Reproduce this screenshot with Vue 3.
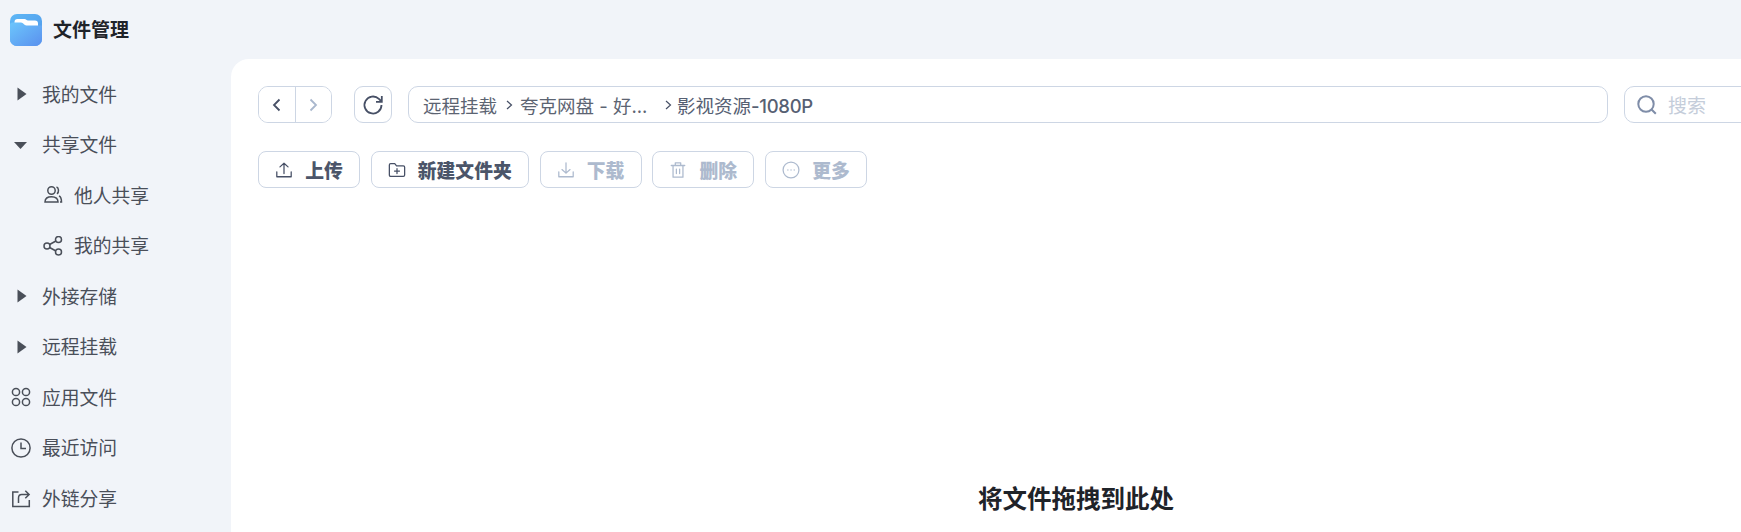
<template>
  <div class="page">
    <header class="top">
      <svg class="logo" viewBox="0 0 32 32">
        <defs>
          <linearGradient id="folderBack" x1="0" y1="0" x2="1" y2="1">
            <stop offset="0" stop-color="#5fb8f6" />
            <stop offset="1" stop-color="#4f97ea" />
          </linearGradient>
          <linearGradient id="folderFront" x1="0" y1="0" x2="1" y2="1">
            <stop offset="0" stop-color="#6cc6fc" />
            <stop offset="1" stop-color="#5a90ee" />
          </linearGradient>
        </defs>
        <rect width="32" height="32" rx="7" fill="url(#folderBack)" />
        <path d="M4.500 8c0-2 1-3 3-3h7c1.500 0 2 1.500 3.500 1.500h7c2 0 3 1 3 3V14H4.500z" fill="#fff" />
        <path d="M0 11c0-1.500 1-2.500 2.500-2.500H11c2.500 0 3 3 5.500 3H32V25a7 7 0 0 1-7 7H7a7 7 0 0 1-7-7z" fill="url(#folderFront)" />
      </svg>
      <span class="app-name">文件管理</span>
    </header>

    <div class="body">
      <aside class="side">
        <div v-for="item in navItems" :key="item.label" class="nav-row" :class="{ sub: item.sub }">
          <span class="nav-icon">
            <svg v-if="item.icon === 'right'" viewBox="0 0 20 20"><path d="M6.500 3.500 15.500 10l-9 6.500z" fill="#4a4f59" /></svg>
            <svg v-else-if="item.icon === 'down'" viewBox="0 0 20 20"><path d="M3 7h13l-6.500 7z" fill="#4a4f59" /></svg>
            <svg v-else-if="item.icon === 'users'" viewBox="0 0 20 20" class="line">
              <circle cx="8.500" cy="5.500" r="3.700" />
              <path d="M2 17c0-4 2.500-5.300 6.500-5.300s6.500 1.300 6.500 5.300zM13.500 2c2.300.7 2.800 5 .5 6.800M16 11c1.800.6 2.500 2.500 2.500 6h-1.500" />
            </svg>
            <svg v-else-if="item.icon === 'share'" viewBox="0 0 20 20" class="line">
              <circle cx="4" cy="10" r="3" /><circle cx="15.500" cy="3.500" r="3" /><circle cx="15.500" cy="16" r="3" />
              <path d="M6.600 8.500 12.900 5M6.600 11.500l6.300 3.500" />
            </svg>
            <svg v-else-if="item.icon === 'apps'" viewBox="0 0 20 20" class="line">
              <circle cx="5" cy="5" r="3.600" /><circle cx="15" cy="5" r="3.600" />
              <circle cx="5" cy="15" r="3.600" /><circle cx="15" cy="15" r="3.600" />
            </svg>
            <svg v-else-if="item.icon === 'clock'" viewBox="0 0 20 20" class="line">
              <circle cx="10" cy="10" r="9.100" /><path d="M10 4.500v6h5" />
            </svg>
            <svg v-else-if="item.icon === 'link'" viewBox="0 0 20 20" class="line">
              <path d="M7.500 4H1.800v14.500h16.500V12M7.500 15v-5c0-2.200 1-3.500 3.200-3.500h6.800M14.300 2.800l3.800 3.700-3.800 3.700" />
            </svg>
          </span>
          <span class="nav-text">{{ item.label }}</span>
        </div>
      </aside>

      <main class="main">
        <div class="path-row">
          <div class="nav-group">
            <button class="half">
              <svg viewBox="0 0 16 16" class="chev"><path d="M10.500 2.500 5 8l5.500 5.500" stroke="#475066" /></svg>
            </button>
            <button class="half">
              <svg viewBox="0 0 16 16" class="chev"><path d="M5.500 2.500 11 8l-5.500 5.500" stroke="#a9b7cd" /></svg>
            </button>
          </div>
          <button class="refresh">
            <svg viewBox="0 0 24 24" class="refresh-icon">
              <path d="M20.500 12a8.500 8.500 0 1 1-2.600-6.100L20.500 8.500M20.800 3v5.800H15" />
            </svg>
          </button>
          <div class="crumbs">
            <span>远程挂载</span>
            <svg viewBox="0 0 10 14" class="sep"><path d="M3 3 7.500 7 3 11" /></svg>
            <span class="crumb-long">夸克网盘 - 好...</span>
            <svg viewBox="0 0 10 14" class="sep"><path d="M3 3 7.500 7 3 11" /></svg>
            <span class="crumb-last">影视资源<span class="crumb-num">-1080P</span></span>
          </div>
          <div class="search">
            <svg viewBox="0 0 20 20" class="search-icon"><circle cx="9" cy="9" r="7.700" /><path d="m14.500 14.500 4.300 4.300" /></svg>
            <span>搜索</span>
          </div>
        </div>

        <div class="tools">
          <button v-for="tool in tools" :key="tool.label" class="tool" :class="{ off: tool.off }" :style="{ width: tool.width + 'px' }">
            <svg viewBox="0 0 20 20" class="tool-icon">
              <template v-if="tool.icon === 'upload'"><path d="M2 12v5.500h16V12M10 14V2.500M5.500 6.500l4.500-4 4.500 4" /></template>
              <template v-else-if="tool.icon === 'folder'"><path d="M1.500 4.500c0-1 .5-1.500 1.500-1.500h4.500l2 2.500H17c1 0 1.500.7 1.500 1.500v8.500c0 1-.5 1.500-1.500 1.500H3c-1 0-1.500-.5-1.500-1.500zM10 8.500v5.500M7.200 11.200h5.600" /></template>
              <template v-else-if="tool.icon === 'download'"><path d="M2 12v5.500h16V12M10 2V13.500M5.500 9.500l4.500 4 4.500-4" /></template>
              <template v-else-if="tool.icon === 'trash'"><path d="M2.500 5h15M7 5V2h6v3M4.500 5v13h11V5M8.200 9v5M11.800 9v5" /></template>
              <template v-else><circle cx="10" cy="10" r="8.800" /><path d="M6.500 10h.1M10 10h.1M13.500 10h.1" /></template>
            </svg>
            <span>{{ tool.label }}</span>
          </button>
        </div>

        <div class="drop">将文件拖拽到此处</div>
      </main>
    </div>
  </div>
</template>

<script setup>
const navItems = [
  { label: '我的文件', icon: 'right' },
  { label: '共享文件', icon: 'down' },
  { label: '他人共享', icon: 'users', sub: true },
  { label: '我的共享', icon: 'share', sub: true },
  { label: '外接存储', icon: 'right' },
  { label: '远程挂载', icon: 'right' },
  { label: '应用文件', icon: 'apps' },
  { label: '最近访问', icon: 'clock' },
  { label: '外链分享', icon: 'link' },
]

const tools = [
  { label: '上传', icon: 'upload', width: 102 },
  { label: '新建文件夹', icon: 'folder', width: 158 },
  { label: '下载', icon: 'download', width: 102, off: true },
  { label: '删除', icon: 'trash', width: 102, off: true },
  { label: '更多', icon: 'more', width: 102, off: true },
]
</script>

<style>
html,
body {
  margin: 0;
  background: #f1f4f9;
}
</style>

<style scoped>
.page {
  width: 1741px;
  height: 532px;
  overflow: hidden;
  background: #f1f4f9;
  font-family: Inter, "Noto Sans CJK SC", sans-serif;
  color: #4a4f59;
}
.top {
  height: 59px;
  display: flex;
  align-items: center;
  padding-left: 10px;
  box-sizing: border-box;
}
.logo {
  width: 32px;
  height: 32px;
}
.app-name {
  margin-left: 11px;
  margin-top: -2px;
  font-size: 19px;
  font-weight: 700;
  color: #1f2329;
}
.body {
  display: flex;
  height: 473px;
}
.side {
  width: 231px;
  flex-shrink: 0;
  padding-top: 10px;
}
.nav-row {
  height: 50.500px;
  display: flex;
  align-items: center;
  padding-left: 11px;
  font-size: 18.800px;
  line-height: 27px;
}
.nav-row.sub {
  padding-left: 43px;
}
.nav-icon {
  width: 20px;
  height: 20px;
  margin-right: 11px;
  display: flex;
}
.nav-icon svg {
  width: 20px;
  height: 20px;
}
.nav-text {
  position: relative;
  top: 1px;
}
.line {
  fill: none;
  stroke: #4a4f59;
  stroke-width: 1.500;
}
.main {
  flex: 1;
  min-width: 0;
  background: #fff;
  border-top-left-radius: 18px;
  padding: 27px 0 0 27px;
  overflow: hidden;
}
.path-row {
  display: flex;
  align-items: flex-start;
  height: 37px;
}
button {
  background: #fff;
  border: 1px solid #cdd6e4;
  padding: 0;
  font-family: inherit;
}
.nav-group {
  width: 74px;
  height: 37px;
  display: flex;
  box-sizing: border-box;
  border: 1px solid #cdd6e4;
  border-radius: 10px;
  overflow: hidden;
  flex-shrink: 0;
}
.half {
  flex: 1;
  border: 0;
  display: flex;
  align-items: center;
  justify-content: center;
}
.half + .half {
  border-left: 1px solid #cdd6e4;
}
.chev {
  width: 16px;
  height: 16px;
  fill: none;
  stroke-width: 1.800;
}
.refresh {
  width: 38px;
  height: 37px;
  margin-left: 22px;
  border-radius: 9px;
  display: flex;
  align-items: center;
  justify-content: center;
  flex-shrink: 0;
}
.refresh-icon {
  width: 24px;
  height: 24px;
  fill: none;
  stroke: #475066;
  stroke-width: 1.800;
}
.crumbs {
  width: 1200px;
  height: 37px;
  margin-left: 16px;
  margin-right: 16px;
  flex-shrink: 0;
  box-sizing: border-box;
  border: 1px solid #cdd6e4;
  border-radius: 10px;
  display: flex;
  align-items: center;
  padding-left: 14px;
  font-size: 18.500px;
  color: #5c6472;
}
.sep {
  width: 10px;
  height: 14px;
  margin: 0 6px 0 7px;
  fill: none;
  stroke: #475066;
  stroke-width: 1.200;
}
.crumb-long {
  width: 136px;
}
.crumb-last {
  margin-left: -2px;
  color: #566073;
}
.crumb-num {
  font-weight: 500;
  letter-spacing: -0.300px;
}
.search {
  width: 300px;
  height: 37px;
  flex-shrink: 0;
  box-sizing: border-box;
  border: 1px solid #cdd6e4;
  border-radius: 10px;
  display: flex;
  align-items: center;
  padding-left: 12px;
  font-size: 19px;
  color: #c5cdda;
}
.search-icon {
  width: 20px;
  height: 20px;
  margin-right: 11px;
  fill: none;
  stroke: #7f8da8;
  stroke-width: 2;
}
.tools {
  display: flex;
  gap: 10.750px;
  margin-top: 28px;
}
.tool {
  height: 37px;
  border-radius: 8px;
  display: flex;
  align-items: center;
  justify-content: center;
  gap: 12px;
  font-size: 18.800px;
  font-weight: 900;
  color: #4b5569;
}
.tool.off {
  color: #adbace;
}
.tool-icon {
  width: 18px;
  height: 18px;
  fill: none;
  stroke: #475066;
  stroke-width: 1.400;
  stroke-linecap: round;
  stroke-linejoin: round;
}
.tool.off .tool-icon {
  stroke: #adbace;
}
.drop {
  margin-top: 293px;
  margin-left: 720px;
  font-size: 24.500px;
  font-weight: 700;
  color: #1f2329;
  line-height: 36px;
  white-space: nowrap;
}
</style>
